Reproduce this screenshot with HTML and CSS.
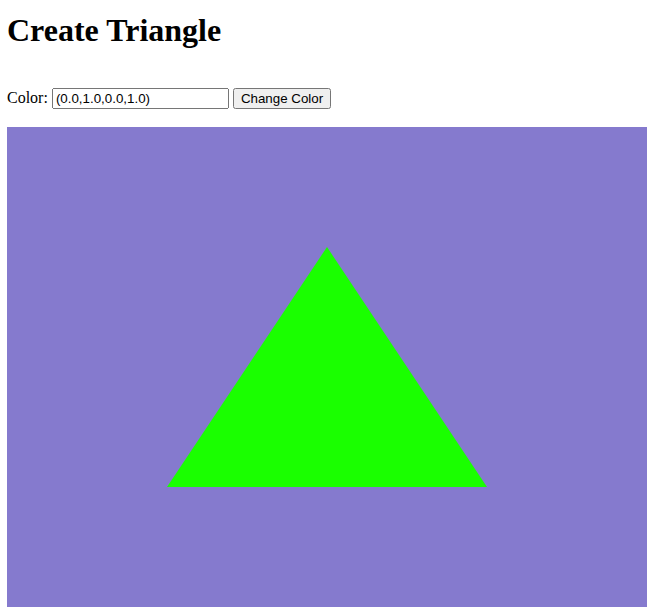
FILE: index.html
```html
<!DOCTYPE html>
<html>
<head>
<meta charset="utf-8">
<link rel="stylesheet" href="styles.css">
</head>
<body>
<h1 class="title">Create Triangle</h1>
<div class="controls">
<label class="label">Color: <input class="color-input" type="text" value="(0.0,1.0,0.0,1.0)"></label>
<button class="change-btn">Change Color</button>
</div>
<div class="canvas-wrap">
<svg class="canvas" width="640" height="480" viewBox="0 0 640 480">
<rect width="640" height="480" fill="#857ace"/>
<polygon points="320,120 160,360 480,360" fill="#1aff00"/>
</svg>
</div>
</body>
</html>
```
FILE: styles.css
```css
body {
  margin: 8px 7px;
  font-family: "Liberation Serif", serif;
  font-size: 16px;
}
.title {
  font-size: 32px;
  font-weight: bold;
  margin: 4px 0 39px;
}
.controls {
  margin: 0 0 18px;
}
.color-input {
  font-family: "Liberation Sans", sans-serif;
  font-size: 13.33px;
  width: 169px;
  box-sizing: content-box;
}
.change-btn {
  font-family: "Liberation Sans", sans-serif;
  font-size: 13.33px;
  padding: 1px 6px;
}
.canvas-wrap {
  line-height: 0;
}
.canvas {
  display: block;
}
```
